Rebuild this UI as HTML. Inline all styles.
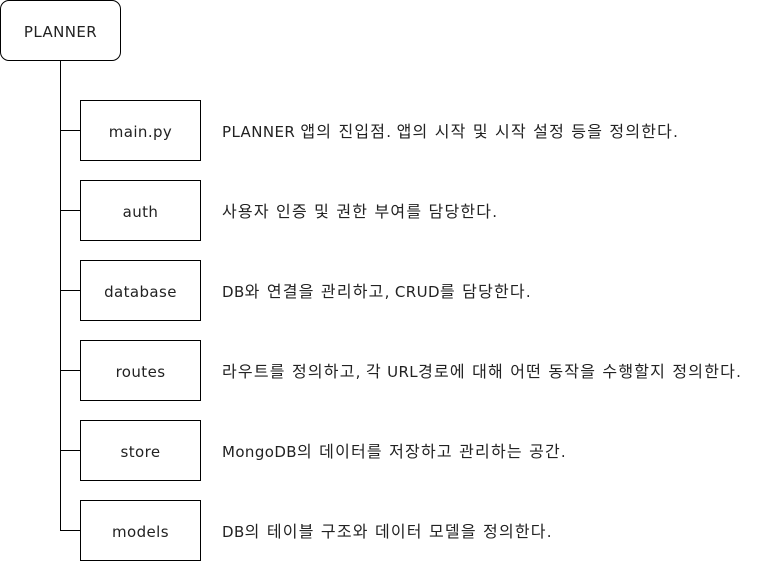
<!DOCTYPE html>
<html><head><meta charset="utf-8"><style>
body{margin:0;width:781px;height:561px;background:#fff;position:relative;overflow:hidden;font-family:"DejaVu Sans","Noto Sans CJK KR",sans-serif;font-size:15px;letter-spacing:0.4px;color:#222}
.b{position:absolute;box-sizing:border-box;border:1px solid #000;background:#fff;display:flex;align-items:center;justify-content:center;padding-top:2px}
.t{position:absolute;left:222px;line-height:20px;white-space:nowrap}
.t span{font-size:16px;letter-spacing:1.2px}
.l{position:absolute;background:#000}
</style></head><body>
<div class="l" style="left:60px;top:60px;width:1px;height:471px"></div>
<div class="b" style="left:0;top:0;width:121px;height:61px;border-radius:9px">PLANNER</div>
<div class="l" style="left:60px;top:130px;width:20px;height:1px"></div>
<div class="l" style="left:60px;top:210px;width:20px;height:1px"></div>
<div class="l" style="left:60px;top:290px;width:20px;height:1px"></div>
<div class="l" style="left:60px;top:370px;width:20px;height:1px"></div>
<div class="l" style="left:60px;top:450px;width:20px;height:1px"></div>
<div class="l" style="left:60px;top:530px;width:20px;height:1px"></div>
<div class="b" style="left:80px;top:100px;width:121px;height:61px">main.py</div>
<div class="b" style="left:80px;top:180px;width:121px;height:61px">auth</div>
<div class="b" style="left:80px;top:260px;width:121px;height:61px">database</div>
<div class="b" style="left:80px;top:340px;width:121px;height:61px">routes</div>
<div class="b" style="left:80px;top:420px;width:121px;height:61px">store</div>
<div class="b" style="left:80px;top:500px;width:121px;height:61px">models</div>
<div class="t" style="top:122px">PLANNER <span>앱의 진입점</span>. <span>앱의 시작 및 시작 설정 등을 정의한다</span>.</div>
<div class="t" style="top:202px"><span>사용자 인증 및 권한 부여를 담당한다</span>.</div>
<div class="t" style="top:282px">DB<span>와 연결을 관리하고</span>, CRUD<span>를 담당한다</span>.</div>
<div class="t" style="top:362px"><span>라우트를 정의하고</span>, <span>각</span> URL<span>경로에 대해 어떤 동작을 수행할지 정의한다</span>.</div>
<div class="t" style="top:442px">MongoDB<span>의 데이터를 저장하고 관리하는 공간</span>.</div>
<div class="t" style="top:522px">DB<span>의 테이블 구조와 데이터 모델을 정의한다</span>.</div>
</body></html>
